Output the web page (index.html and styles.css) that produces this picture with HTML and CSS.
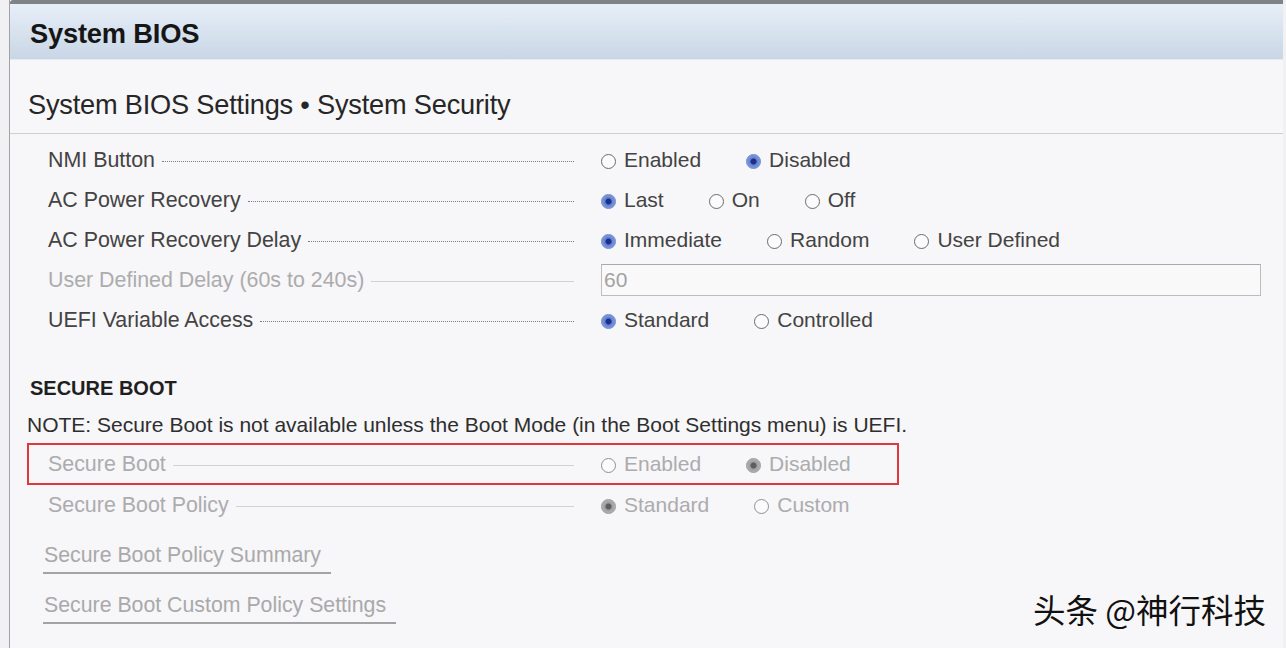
FILE: index.html
```html
<!DOCTYPE html>
<html lang="en">
<head>
<meta charset="utf-8">
<title>System BIOS</title>
<link rel="stylesheet" href="styles.css">
</head>
<body>
<div class="panel">
  <div class="header"><h1 class="title">System BIOS</h1></div>
  <div class="subhead"><h2 class="subtitle">System BIOS Settings • System Security</h2></div>

  <div class="settings">
    <div class="row">
      <div class="label"><span class="label-text">NMI Button</span><span class="leader"></span></div>
      <div class="options">
        <span class="opt"><span class="radio"></span>Enabled</span>
        <span class="opt"><span class="radio on"></span>Disabled</span>
      </div>
    </div>
    <div class="row">
      <div class="label"><span class="label-text">AC Power Recovery</span><span class="leader"></span></div>
      <div class="options">
        <span class="opt"><span class="radio on"></span>Last</span>
        <span class="opt"><span class="radio"></span>On</span>
        <span class="opt"><span class="radio"></span>Off</span>
      </div>
    </div>
    <div class="row">
      <div class="label"><span class="label-text">AC Power Recovery Delay</span><span class="leader"></span></div>
      <div class="options">
        <span class="opt"><span class="radio on"></span>Immediate</span>
        <span class="opt"><span class="radio"></span>Random</span>
        <span class="opt"><span class="radio"></span>User Defined</span>
      </div>
    </div>
    <div class="row disabled">
      <div class="label"><span class="label-text">User Defined Delay (60s to 240s)</span><span class="leader"></span></div>
      <div class="options">
        <div class="textbox">60</div>
      </div>
    </div>
    <div class="row">
      <div class="label"><span class="label-text">UEFI Variable Access</span><span class="leader"></span></div>
      <div class="options">
        <span class="opt"><span class="radio on"></span>Standard</span>
        <span class="opt"><span class="radio"></span>Controlled</span>
      </div>
    </div>
  </div>

  <h3 class="section-title">SECURE BOOT</h3>
  <p class="note">NOTE: Secure Boot is not available unless the Boot Mode (in the Boot Settings menu) is UEFI.</p>

  <div class="highlight">
    <div class="row disabled in-box">
      <div class="label"><span class="label-text">Secure Boot</span><span class="leader"></span></div>
      <div class="options">
        <span class="opt"><span class="radio"></span>Enabled</span>
        <span class="opt"><span class="radio on"></span>Disabled</span>
      </div>
    </div>
  </div>
  <div class="row disabled">
    <div class="label"><span class="label-text">Secure Boot Policy</span><span class="leader"></span></div>
    <div class="options">
      <span class="opt"><span class="radio on"></span>Standard</span>
      <span class="opt"><span class="radio"></span>Custom</span>
    </div>
  </div>

  <div class="links">
    <span class="link">Secure Boot Policy Summary</span>
    <span class="link">Secure Boot Custom Policy Settings</span>
  </div>

  <div class="watermark">头条 @神行科技</div>
</div>
</body>
</html>
```

FILE: styles.css
```css
html, body {
  margin: 0;
  padding: 0;
}
body {
  background: #f1f1f3;
  font-family: "Liberation Sans", Arial, sans-serif;
  width: 1286px;
  height: 648px;
  overflow: hidden;
}
.panel {
  position: relative;
  margin-left: 9px;
  width: 1273px;
  height: 648px;
  border-left: 1px solid #a2a3a6;
  background: #f7f6f8;
}
.header {
  box-sizing: border-box;
  height: 60px;
  border-top: 4px solid #808386;
  border-top-left-radius: 3px;
  background: linear-gradient(#e7eef8 0%, #dbe5f1 40%, #c9d6e5 100%);
  border-bottom: 1px solid #e6ebf1;
  display: flex;
  align-items: center;
  padding: 5px 0 0 20px;
}
.title {
  margin: 0;
  font-size: 27.3px;
  font-weight: bold;
  color: #161616;
  letter-spacing: -0.2px;
}
.subhead {
  box-sizing: border-box;
  height: 74px;
  border-bottom: 1px solid #cfcfd3;
  display: flex;
  align-items: center;
  padding: 17px 0 0 18px;
}
.subtitle {
  margin: 0;
  font-size: 27.2px;
  font-weight: normal;
  color: #262626;
  letter-spacing: -0.2px;
}
.settings {
  padding-top: 6px;
}
.row {
  display: grid;
  grid-template-columns: 526px 1fr;
  column-gap: 27px;
  height: 40px;
  align-items: center;
  padding-left: 38px;
  font-size: 21px;
  color: #434343;
}
.label {
  display: flex;
  align-items: center;
}
.label-text {
  white-space: nowrap;
  font-size: 21.4px;
}
.leader {
  flex: 1;
  margin-left: 7px;
  margin-top: 2px;
  border-top: 1px dotted #7d7d80;
}
.options {
  display: flex;
  align-items: center;
  gap: 45px;
}
.opt {
  display: flex;
  align-items: center;
  gap: 8px;
  white-space: nowrap;
}
.radio {
  box-sizing: border-box;
  width: 15px;
  height: 15px;
  border-radius: 50%;
  border: 1.5px solid #6a6a6d;
  background: #fbfbfb;
  margin-top: 3px;
  flex: none;
}
.radio.on {
  border: 1px solid #6d86c6;
  background: radial-gradient(circle, #1e2f86 0 2.5px, #5f7fd2 3.5px, #88a3e2 7.5px);
}
.disabled {
  color: #acacae;
}
.disabled .leader {
  border-top: 1px solid #d2d2d4;
}
.disabled .radio {
  border-color: #8f8f92;
}
.disabled .radio.on {
  border: 1px solid #9a9a9c;
  background: radial-gradient(circle, #5d5d60 0 2.5px, #9c9c9f 3.5px, #b9b9bb 7.5px);
}
.textbox {
  box-sizing: border-box;
  width: 660px;
  height: 32px;
  border: 1px solid #bdbdc0;
  border-top-color: #a9a9ac;
  background: #f9f9fa;
  color: #a2a2a4;
  font-size: 21px;
  line-height: 30px;
  padding-left: 2px;
}
.section-title {
  margin: 33px 0 0 0;
  height: 30px;
  line-height: 30px;
  padding-left: 20px;
  font-size: 20px;
  font-weight: bold;
  color: #1f1f1f;
}
.note {
  margin: 7px 0 0 0;
  height: 30px;
  line-height: 30px;
  padding-left: 17px;
  font-size: 21px;
  color: #2e2e2e;
}
.highlight {
  box-sizing: border-box;
  margin: 3px 0 0 17px;
  width: 872px;
  height: 42px;
  border: 2px solid #e2373a;
}
.row.in-box {
  height: 38px;
  padding-left: 19px;
}
.links {
  display: flex;
  flex-direction: column;
  align-items: flex-start;
  gap: 18px;
  margin-top: 17px;
  padding-left: 33px;
}
.link {
  display: inline-block;
  font-size: 21.3px;
  line-height: 26px;
  color: #a9a9ab;
  padding: 0 10px 4px 1px;
  border-bottom: 2px solid #a3a3a6;
}
.watermark {
  position: absolute;
  left: 1023px;
  top: 589px;
  font-family: "Noto Sans CJK SC", "Noto Sans", sans-serif;
  font-size: 32.5px;
  line-height: 40px;
  color: #111;
  text-shadow: 0 0 2px #fff;
}
```
